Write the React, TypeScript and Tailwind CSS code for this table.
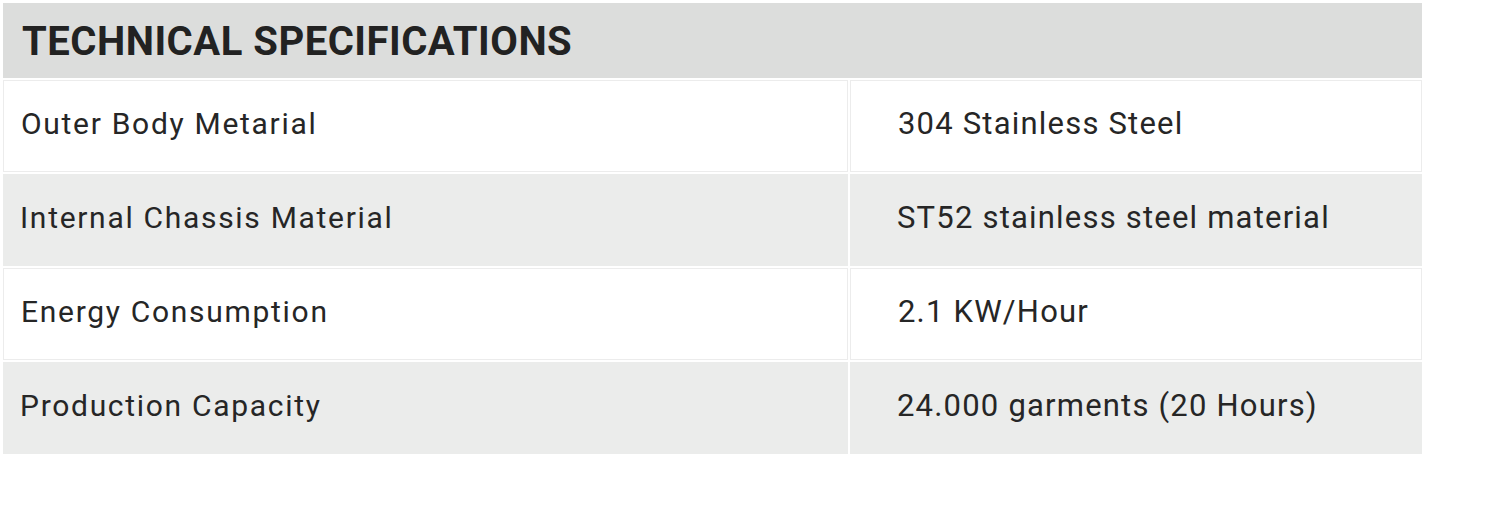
import React from 'react';

const rows = [
  { label: 'Outer Body Metarial', value: '304 Stainless Steel' },
  { label: 'Internal Chassis Material', value: 'ST52 stainless steel material' },
  { label: 'Energy Consumption', value: '2.1 KW/Hour' },
  { label: 'Production Capacity', value: '24.000 garments (20 Hours)' },
];

export default function App() {
  return (
    <div className="w-[1502px] h-[508px] bg-white pl-[3px] pt-[3px] font-['Roboto',sans-serif] text-[#262626]">
      <div className="w-[1419px] flex flex-col gap-[2px]">
        <div className="h-[75px] bg-[#dcdddc] flex items-center pl-[19px] pt-[3px]">
          <h2 className="text-[40px] font-bold tracking-[0.5px] text-[#222]">TECHNICAL SPECIFICATIONS</h2>
        </div>
        {rows.map((r, i) => {
          const odd = i % 2 === 1;
          const cell = odd ? 'bg-[#ebeceb]' : 'bg-white border border-[#ececec]';
          return (
            <div key={r.label} className="flex gap-[2px] h-[92px]">
              <div className={`w-[845px] flex items-center pl-[17px] pb-[5px] ${cell}`}>
                <span className="text-[30px] tracking-[1.7px]">{r.label}</span>
              </div>
              <div className={`flex-1 flex items-center pl-[47px] pb-[3px] ${cell}`}>
                <span className="text-[31px] tracking-[1.2px]">{r.value}</span>
              </div>
            </div>
          );
        })}
      </div>
    </div>
  );
}
